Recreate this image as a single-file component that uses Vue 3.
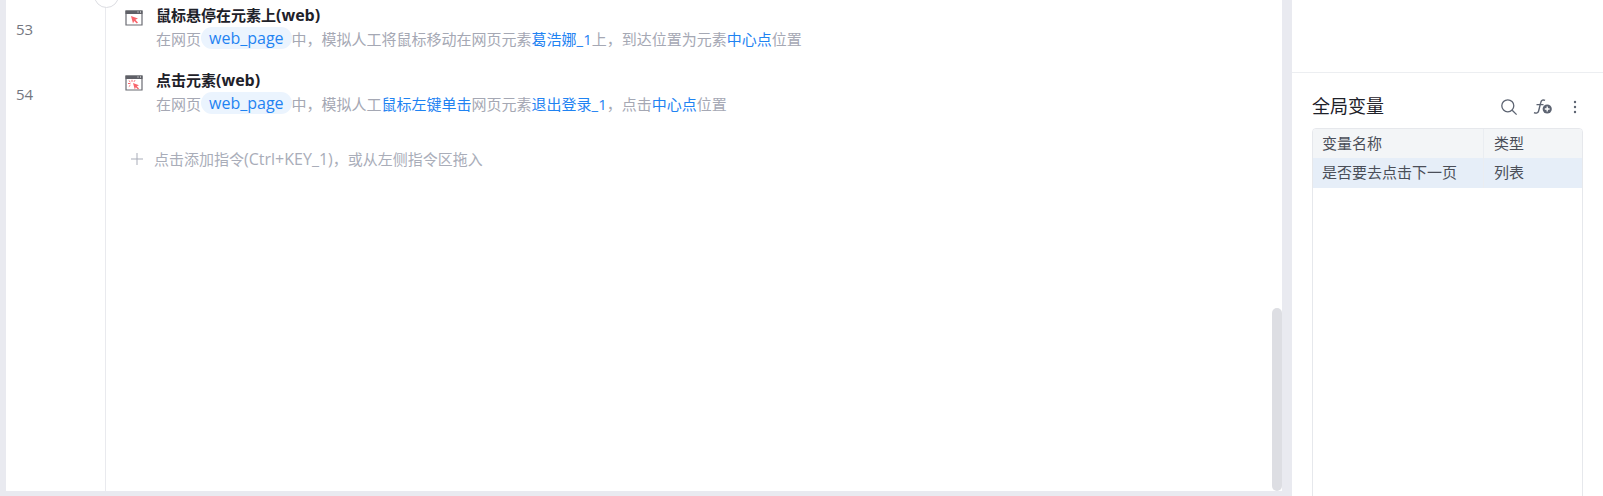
<script setup>
const rows = [
  {
    no: 53,
    title: '鼠标悬停在元素上',
    click: false,
    parts: [
      { t: '中，模拟人工将鼠标移动在网页元素' },
      { t: '葛浩娜_1', link: true },
      { t: '上，到达位置为元素' },
      { t: '中心点', link: true },
      { t: '位置' }
    ]
  },
  {
    no: 54,
    title: '点击元素',
    click: true,
    parts: [
      { t: '中，模拟人工' },
      { t: '鼠标左键单击', link: true },
      { t: '网页元素' },
      { t: '退出登录_1', link: true },
      { t: '，点击' },
      { t: '中心点', link: true },
      { t: '位置' }
    ]
  }
]
</script>

<template>
  <div class="page">
    <main class="editor">
      <div class="gutter-knob"></div>
      <div class="rows">
        <div v-for="row in rows" :key="row.no" class="row">
          <div class="row__no">{{ row.no }}</div>
          <svg class="row__icon" width="18" height="16" viewBox="0 0 18 16">
            <path d="M1 1h16v14H1z" fill="#fff" stroke="#6b6c73" stroke-width="1.2" />
            <path d="M.5 .5h17v3.5H.5z" fill="#5f6067" />
            <path d="M12.5 2h1M15 2h1" stroke="#fff" stroke-width="1.2" />
            <path v-if="!row.click" d="M6 6l7 2.6-2.6 1.2 2.6 2.7-1.2 1.1-2.6-2.7-1.2 2.6z" fill="#f8656c" />
            <template v-else>
              <path d="M8 8l6 2.3-2.2 1 2.2 2.3-1 1-2.2-2.3-1 2.2z" fill="#f8656c" />
              <path d="M7 4.8v2M3 8.5h2.4M3.8 5.6l1.6 1.4M3.8 11.6l1.6-1.4M10 5.2l-1 1.6" stroke="#f8656c" stroke-width="1" fill="none" />
            </template>
          </svg>
          <div class="row__body">
            <div class="row__title">{{ row.title }}<span class="latin">(web)</span></div>
            <div class="row__desc">
              <span>在网页</span>
              <span class="pill">web_page</span>
              <span v-for="(p, i) in row.parts" :key="i" :class="{ link: p.link }">{{ p.t }}</span>
            </div>
          </div>
        </div>
        <div class="add">
          <svg width="14" height="14" viewBox="0 0 14 14"><path d="M7 1v12M1 7h12" stroke="#a9adb9" stroke-width="1" fill="none" /></svg>
          <span>点击添加指令<span class="latin">(Ctrl+KEY_1)</span>，或从左侧指令区拖入</span>
        </div>
      </div>
      <div class="scroll-thumb"></div>
    </main>

    <aside class="side">
      <div class="side__top"></div>
      <div class="side__bottom">
        <div class="vars-head">
          <h2>全局变量</h2>
          <div class="vars-head__tools">
            <svg width="18" height="18" viewBox="0 0 18 18"><circle cx="7.8" cy="7.8" r="6" stroke="#5d6472" stroke-width="1.3" fill="none" /><path d="M12.2 12.2l4.4 4.4" stroke="#5d6472" stroke-width="1.3" fill="none" /></svg>
            <svg width="20" height="18" viewBox="0 0 20 18">
              <path d="M13 2.4C11.2 1.4 9.3 2 8.8 4.4L6.6 13c-.5 2-2.2 2.6-4.6 1.6M4.5 6.6h7" stroke="#5d6472" stroke-width="1.4" fill="none" />
              <circle cx="15.2" cy="11" r="4.6" fill="#5d6472" />
              <path d="M12.8 11h4.8M15.2 8.6v4.8" stroke="#fff" stroke-width="1.3" />
            </svg>
            <svg class="vars-head__more" width="4" height="14" viewBox="0 0 4 14"><circle cx="2" cy="2" r="1.2" fill="#5d6472" /><circle cx="2" cy="7" r="1.2" fill="#5d6472" /><circle cx="2" cy="12" r="1.2" fill="#5d6472" /></svg>
          </div>
        </div>
        <div class="vars-table">
          <div class="vars-row vars-row--head">
            <div class="cell cell--name">变量名称</div>
            <div class="cell">类型</div>
          </div>
          <div class="vars-row vars-row--active">
            <div class="cell cell--name">是否要去点击下一页</div>
            <div class="cell">列表</div>
          </div>
        </div>
      </div>
    </aside>
  </div>
</template>

<style>
html, body {
  margin: 0;
  overflow: hidden;
}
</style>

<style scoped>
.page {
  display: flex;
  width: 1603px;
  height: 496px;
  overflow: hidden;
  padding-left: 6px;
  box-sizing: border-box;
  background: #e9eaf0;
  font-family: "Open Sans", "Noto Sans CJK SC", sans-serif;
  font-size: 15px;
}

.editor {
  position: relative;
  width: 1276px;
  height: 491px;
  background: #fff;
  overflow: hidden;
}

.editor::before {
  content: "";
  position: absolute;
  left: 99px;
  top: 0;
  bottom: 0;
  width: 1px;
  background: #e9eaee;
}

.gutter-knob {
  position: absolute;
  left: 88px;
  top: -17px;
  width: 23px;
  height: 23px;
  border: 1px solid #dcdde2;
  border-radius: 50%;
  background: #fff;
}

.rows {
  padding-top: 5px;
}

.row {
  display: flex;
  align-items: flex-start;
  height: 65px;
}

.row__no {
  width: 119px;
  box-sizing: border-box;
  padding: 10px 0 0 10px;
  line-height: 28px;
  color: #74777f;
}

.row__icon {
  margin-top: 5px;
  flex: none;
}

.row__body {
  margin-left: 13px;
}

.row__title {
  line-height: 20px;
  font-weight: 700;
  color: #1e2129;
}

.latin {
  font-size: 16px;
}

.row__desc {
  display: flex;
  align-items: center;
  height: 24px;
  margin-top: 1px;
  color: #a5a8b4;
  white-space: nowrap;
}

.pill {
  height: 22px;
  line-height: 22px;
  padding: 0 8px;
  border-radius: 11px;
  background: #ebf4fe;
  color: #1f83f2;
  font-size: 16px;
}

.link {
  color: #1f83f2;
}

.add {
  display: flex;
  align-items: center;
  gap: 10px;
  margin: 12px 0 0 124px;
  color: #a9adb9;
  line-height: 24px;
}

.scroll-thumb {
  position: absolute;
  left: 1266px;
  top: 308px;
  bottom: 0;
  width: 10px;
  border-radius: 5px;
  background: #dddee3;
}

.side {
  width: 311px;
  margin-left: 10px;
  background: #fff;
  flex: none;
}

.side__top {
  height: 72px;
  border-bottom: 1px solid #eceef1;
}

.side__bottom {
  padding: 13px 20px 0;
}

.vars-head {
  display: flex;
  align-items: center;
  justify-content: space-between;
  height: 42px;
  padding-bottom: 4px;
  box-sizing: border-box;
}

.vars-head h2 {
  margin: 0;
  font-size: 18px;
  font-weight: 400;
  color: #1e2129;
}

.vars-head__tools {
  display: flex;
  align-items: center;
  gap: 14px;
  margin-top: 3px;
  padding-right: 6px;
}

.vars-head__more {
  margin-left: 7px;
}

.vars-table {
  height: 400px;
  border: 1px solid #e6e8ec;
  border-radius: 4px;
  overflow: hidden;
}

.vars-row {
  display: flex;
  height: 29px;
  line-height: 28px;
  color: #4a4e58;
}

.vars-row--head {
  background: #f3f5f7;
}

.vars-row--active {
  height: 30px;
  line-height: 28px;
  background: #e6eef8;
}

.cell {
  padding-left: 10px;
}

.cell--name {
  width: 161px;
  border-right: 1px solid #eaedf1;
  padding-left: 9px;
}
</style>
